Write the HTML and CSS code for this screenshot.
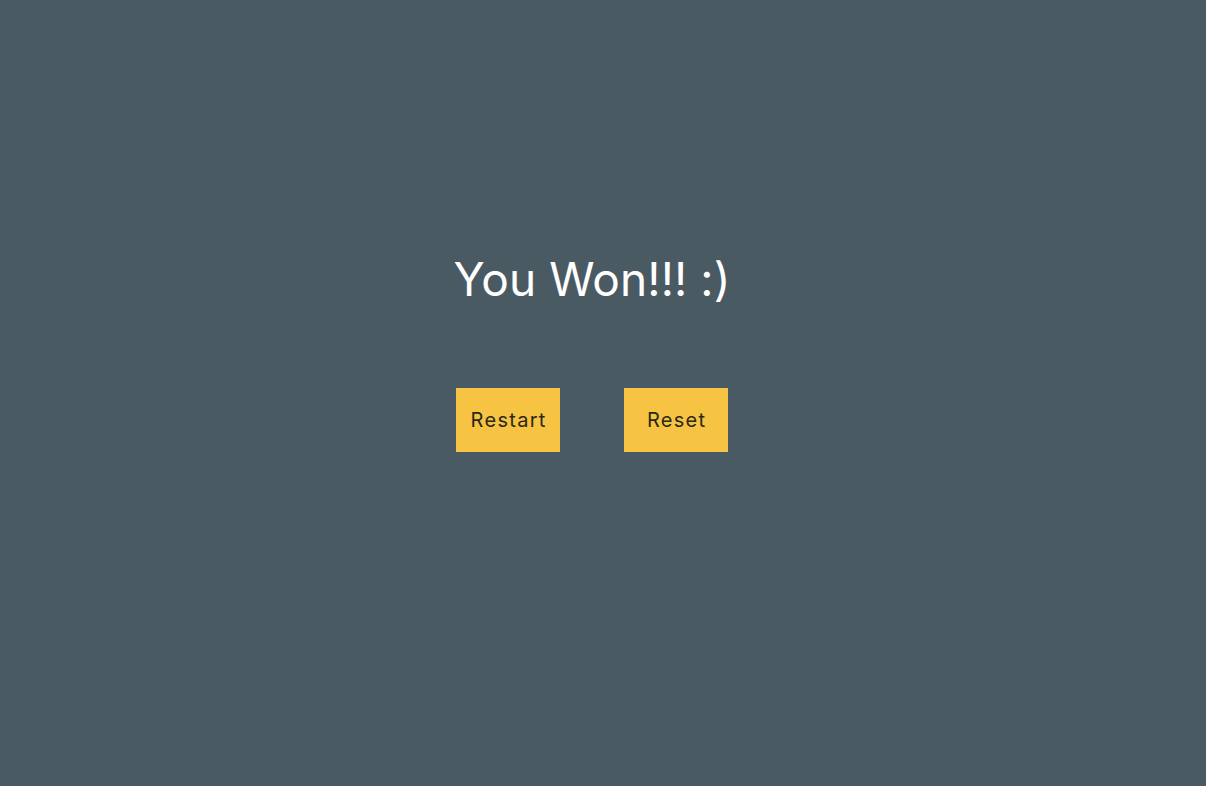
FILE: index.html
```html
<!DOCTYPE html>
<html>
<head>
<meta charset="utf-8">
<link rel="stylesheet" href="styles.css">
</head>
<body>
<main class="screen">
  <h1 class="title">You Won!!! :)</h1>
  <div class="actions">
    <button class="btn">Restart</button>
    <button class="btn">Reset</button>
  </div>
</main>
</body>
</html>
```
FILE: styles.css
```css
html, body {
  margin: 0;
  padding: 0;
  height: 100%;
}
body {
  background: #4a5a63;
  font-family: Inter, "Noto Sans", sans-serif;
}
.screen {
  width: 1184px;
  display: flex;
  flex-direction: column;
  align-items: center;
  padding-top: 251px;
}
.title {
  margin: 0;
  font-size: 46px;
  font-weight: 400;
  line-height: 56px;
  letter-spacing: 0.1px;
  color: #ffffff;
}
.actions {
  display: flex;
  gap: 64px;
  margin-top: 81px;
}
.btn {
  width: 104px;
  height: 64px;
  border: none;
  border-radius: 0;
  background: #f6c343;
  color: #2b2818;
  font-family: Inter, "Noto Sans", sans-serif;
  font-size: 20px;
  letter-spacing: 1.3px;
  text-indent: 1.3px;
  padding: 0;
}
```
